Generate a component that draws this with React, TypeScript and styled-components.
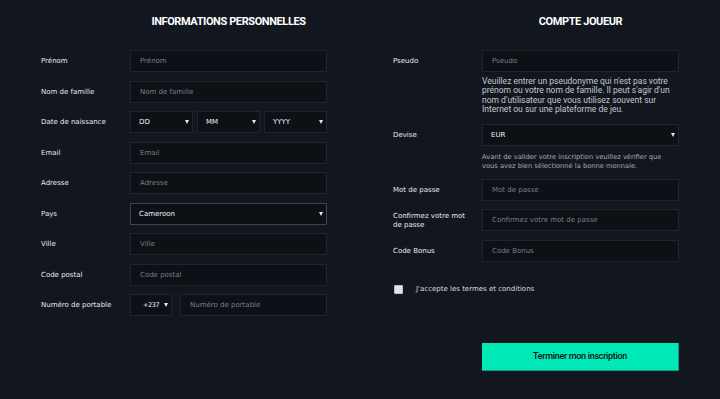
import React from 'react';
import styled, { createGlobalStyle } from 'styled-components';

const GlobalStyle = createGlobalStyle`
    html, body {
        margin: 0;
        padding: 0;
        background: #12171f;
    }
    * { box-sizing: border-box; }
`;

const Page = styled.div`
    min-height: 399px;
    padding: 15px 41px 0;
    display: grid;
    grid-template-columns: 286px 286px;
    column-gap: 66px;
    background: #12171f;
    font-family: 'DejaVu Sans', sans-serif;
`;

const Column = styled.div`
    display: flex;
    flex-direction: column;
`;

const Heading = styled.h2`
    margin: 0 0 21px 89px;
    height: 14px;
    line-height: 14px;
    text-align: center;
    font-family: Roboto, sans-serif;
    font-weight: 700;
    font-size: 11px;
    letter-spacing: -0.4px;
    color: #ffffff;
    text-transform: uppercase;
`;

const Row = styled.div<{ $gap?: number }>`
    display: grid;
    grid-template-columns: 89px 1fr;
    align-items: center;
    margin-bottom: ${(p) => (p.$gap ?? 8.5)}px;
`;

const Label = styled.label`
    padding: 1px 6px 0 0;
    font-size: 7px;
    line-height: 9px;
    color: #e6e8eb;
`;

const Input = styled.input`
    width: 100%;
    height: 22px;
    padding: 0 9px;
    background: #0d1015;
    border: 1px solid #1f252e;
    border-radius: 0;
    outline: none;
    font-family: 'DejaVu Sans', sans-serif;
    font-size: 7px;
    color: #e6e8eb;

    &::placeholder {
        color: #7a7f87;
    }
`;

const Fields = styled.div<{ $gap?: number }>`
    display: flex;
    gap: ${(p) => p.$gap ?? 4}px;
`;

const SelectBox = styled.div<{ $w?: string; $focus?: boolean; $pad?: number; $small?: boolean }>`
    position: relative;
    flex: ${(p) => p.$w ?? '1'};
    height: 22px;
    background: #0d1015;
    border: 1px solid ${(p) => (p.$focus ? '#3b4352' : '#1f252e')};
    display: flex;
    align-items: center;
    padding-left: ${(p) => p.$pad ?? 8}px;
    font-size: ${(p) => (p.$small ? '6.5px' : '7px')};
    letter-spacing: ${(p) => (p.$small ? '-0.4px' : '0')};
    color: #f2f3f5;

    &::after {
        content: '';
        position: absolute;
        right: 3px;
        top: 8px;
        border-left: 2px solid transparent;
        border-right: 2px solid transparent;
        border-top: 4px solid #e8e8e8;
    }
`;

const Help = styled.p`
    margin: 5px 0 9.5px 89px;
    font-family: Roboto, sans-serif;
    font-size: 8.5px;
    line-height: 9.4px;
    color: #c3c7cd;
`;

const Note = styled.p`
    margin: 6.5px 0 8px 89px;
    padding-right: 8px;
    font-size: 6.7px;
    line-height: 9px;
    color: #a6aab0;
`;

const CheckRow = styled.label`
    display: flex;
    align-items: center;
    gap: 13px;
    margin: 23px 0 0 1px;
    height: 9px;
    font-size: 7px;
    color: #d8dadd;
`;

const Check = styled.input`
    appearance: none;
    margin: 0;
    width: 9px;
    height: 9px;
    background: #e4e4e4;
    border: 1px solid #b9bcc0;
    border-radius: 1px;
`;

const Submit = styled.button`
    margin: 49px 0 0 89px;
    width: 197px;
    height: 28px;
    background: #00e8b6;
    border: none;
    border-right: 1px solid #0a9c7c;
    border-bottom: 1px solid #0a9c7c;
    font-family: Roboto, sans-serif;
    font-weight: 500;
    font-size: 9px;
    letter-spacing: -0.3px;
    color: #0d1114;
    cursor: pointer;
`;

const leftFields = [
    ['Prénom', 'Prénom'],
    ['Nom de famille', 'Nom de famille'],
];
const leftFields2 = [
    ['Email', 'Email'],
    ['Adresse', 'Adresse'],
];
const leftFields3 = [
    ['Ville', 'Ville'],
    ['Code postal', 'Code postal'],
];

const Field = ({ label, ph }: { label: string; ph: string }) => (
    <Row>
        <Label>{label}</Label>
        <Input placeholder={ph} />
    </Row>
);

export default function App() {
    return (
        <>
            <GlobalStyle />
            <Page>
                <Column>
                    <Heading>Informations personnelles</Heading>
                    {leftFields.map(([l, p]) => <Field key={l} label={l} ph={p} />)}
                    <Row>
                        <Label>Date de naissance</Label>
                        <Fields>
                            <SelectBox>DD</SelectBox>
                            <SelectBox>MM</SelectBox>
                            <SelectBox>YYYY</SelectBox>
                        </Fields>
                    </Row>
                    {leftFields2.map(([l, p]) => <Field key={l} label={l} ph={p} />)}
                    <Row>
                        <Label>Pays</Label>
                        <SelectBox $focus>Cameroon</SelectBox>
                    </Row>
                    {leftFields3.map(([l, p]) => <Field key={l} label={l} ph={p} />)}
                    <Row>
                        <Label>Numéro de portable</Label>
                        <Fields $gap={8}>
                            <SelectBox $w={'0 0 42px'} $pad={12} $small>+237</SelectBox>
                            <Input placeholder="Numéro de portable" />
                        </Fields>
                    </Row>
                </Column>

                <Column>
                    <Heading>Compte joueur</Heading>
                    <Row $gap={0}>
                        <Label>Pseudo</Label>
                        <Input placeholder="Pseudo" />
                    </Row>
                    <Help>
                        Veuillez entrer un pseudonyme qui n'est pas votre prénom ou votre nom de famille. Il peut
                        s'agir d'un nom d'utilisateur que vous utilisez souvent sur Internet ou sur une plateforme de
                        jeu.
                    </Help>
                    <Row $gap={0}>
                        <Label>Devise</Label>
                        <SelectBox>EUR</SelectBox>
                    </Row>
                    <Note>
                        Avant de valider votre inscription veuillez vérifier que vous avez bien sélectionné la bonne
                        monnaie.
                    </Note>
                    <Field label="Mot de passe" ph="Mot de passe" />
                    <Field label="Confirmez votre mot de passe" ph="Confirmez votre mot de passe" />
                    <Row $gap={0}>
                        <Label>Code Bonus</Label>
                        <Input placeholder="Code Bonus" />
                    </Row>
                    <CheckRow>
                        <Check type="checkbox" />
                        J'accepte les termes et conditions
                    </CheckRow>
                    <Submit>Terminer mon inscription</Submit>
                </Column>
            </Page>
        </>
    );
}
